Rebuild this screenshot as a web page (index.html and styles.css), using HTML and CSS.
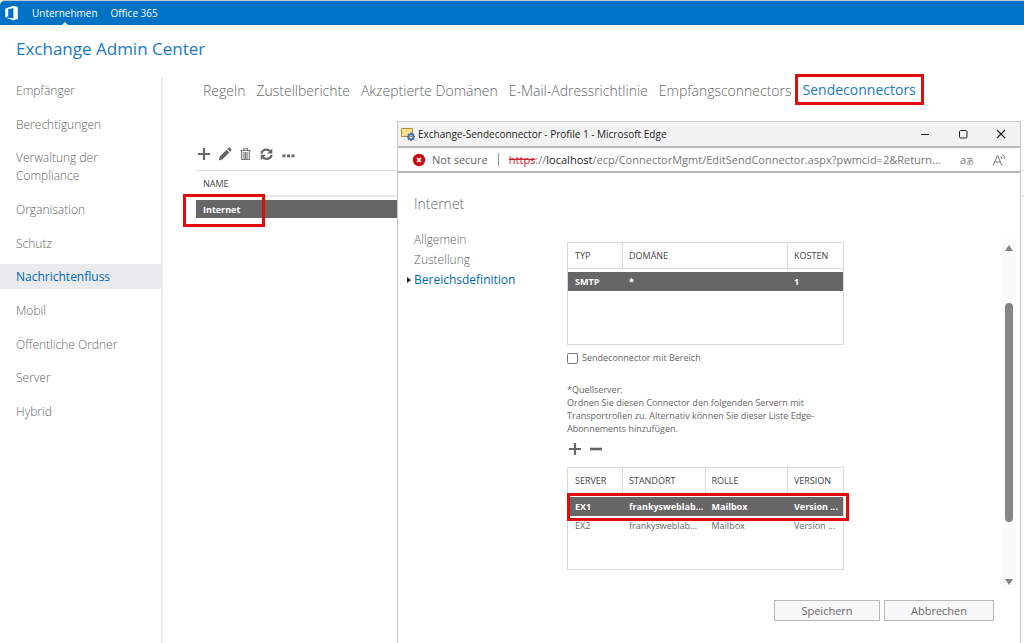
FILE: index.html
```html
<!DOCTYPE html>
<html lang="de">
<head>
<meta charset="utf-8">
<meta name="viewport" content="width=device-width, initial-scale=1">
<title>Exchange Admin Center</title>
<link rel="stylesheet" href="styles.css">
</head>
<body>
<div class="page">
  <header class="topbar">
    <svg class="office-logo" viewBox="0 0 14 16" width="14" height="16" aria-hidden="true"><path d="M0.3 3.5 8.4 0.7 12.8 1.9V13.9L8.4 15.2 0.3 12.4 8.4 13.3V3L3.2 4.2V11.3L0.3 12.5Z" fill="#fff"/></svg>
    <nav class="suite">
      <a class="suite-link current" href="#">Unternehmen</a>
      <a class="suite-link" href="#">Office 365</a>
    </nav>
  </header>

  <h1 class="title">Exchange Admin Center</h1>

  <div class="columns">
    <nav class="side">
      <a href="#">Empfänger</a>
      <a href="#">Berechtigungen</a>
      <a href="#">Verwaltung der<br>Compliance</a>
      <a href="#">Organisation</a>
      <a href="#">Schutz</a>
      <a class="active" href="#">Nachrichtenfluss</a>
      <a href="#">Mobil</a>
      <a href="#">Öffentliche Ordner</a>
      <a href="#">Server</a>
      <a href="#">Hybrid</a>
    </nav>

    <main class="main">
      <nav class="tabs">
        <a href="#">Regeln</a>
        <a href="#">Zustellberichte</a>
        <a href="#">Akzeptierte Domänen</a>
        <a href="#">E-Mail-Adressrichtlinie</a>
        <a href="#">Empfangsconnectors</a>
        <a class="active" href="#">Sendeconnectors</a>
      </nav>

      <div class="toolbar">
        <button type="button" aria-label="Neu"><svg viewBox="0 0 14 14" width="14" height="14"><path d="M7 1V13M1 7H13" stroke="#666" stroke-width="2.2"/></svg></button>
        <button type="button" aria-label="Bearbeiten"><svg viewBox="0 0 14 14" width="14" height="14"><path d="M0.6 13.4 1.8 9.4 8.6 2.7 11.4 5.5 4.6 12.3ZM9.4 1.9 10.7 0.7Q11.4 0.2 12.1 0.8L13.2 1.9Q13.8 2.7 13.2 3.4L12.1 4.7Z" fill="#666"/></svg></button>
        <button type="button" aria-label="Löschen"><svg viewBox="0 0 14 14" width="14" height="14"><path d="M1.5 3.5H11.5M4.5 3.2V1.8H8.5V3.2M2.7 4V12.5H10.3V4M4.9 5V12M6.5 5V12M8.1 5V12" fill="none" stroke="#777" stroke-width="1.1"/></svg></button>
        <button type="button" aria-label="Aktualisieren"><svg viewBox="0 0 14 14" width="14" height="14"><path d="M1.5 6.6A4.8 4.4 0 0 1 10 4.2M11.5 7.8A4.8 4.4 0 0 1 3 10.2" fill="none" stroke="#666" stroke-width="2.2"/><path d="M12.3 1.4V6.6H7ZM0.7 13V7.8H6Z" fill="#666"/></svg></button>
        <button type="button" aria-label="Mehr"><svg viewBox="0 0 14 14" width="14" height="14"><path d="M1.5 7.4h3v2.8h-3zM6 7.4h3v2.8H6zM10.5 7.4h3v2.8h-3z" fill="#666"/></svg></button>
      </div>

      <table class="list">
        <colgroup><col><col class="c-detail"></colgroup>
        <thead><tr><th scope="col">NAME</th><th></th></tr></thead>
        <tbody><tr><td class="chosen">Internet<span class="mark mark-name"></span></td><td></td></tr></tbody>
      </table>
    </main>
  </div>

  <section class="popup" aria-label="Exchange-Sendeconnector">
    <div class="popup-title">
      <svg viewBox="0 0 14 14" width="14" height="14" aria-hidden="true"><path d="M0.5 1.5H11.5V9.5H0.5Z" fill="#f5d978" stroke="#b58d36"/><path d="M1 2 6 6.5 11 2M1 9 4.5 5.5M11 9 7.5 5.5" fill="none" stroke="#fff8dc" stroke-width="1"/><circle cx="10" cy="9.8" r="2.6" fill="none" stroke="#4a74b4" stroke-width="1.9"/><path d="M10 5.6V7M10 12.6V14M5.8 9.8H7.2M12.8 9.8H14M7 6.8 8 7.8M12 11.8 13 12.8M13 6.8 12 7.8M7 12.8 8 11.8" stroke="#4a74b4" stroke-width="1.5"/></svg>
      <span class="popup-name">Exchange-Sendeconnector - Profile 1 - Microsoft Edge</span>
      <button type="button" aria-label="Minimieren"><svg viewBox="0 0 10 10" width="10" height="10"><path d="M1 5.5H9" stroke="#222"/></svg></button>
      <button type="button" aria-label="Maximieren"><svg viewBox="0 0 10 10" width="10" height="10"><rect x="1.5" y="1.5" width="7.5" height="7.5" rx="1.2" fill="none" stroke="#222"/></svg></button>
      <button type="button" aria-label="Schließen"><svg viewBox="0 0 10 10" width="10" height="10"><path d="M1 1 9 9M9 1 1 9" stroke="#222" stroke-width="1.1"/></svg></button>
    </div>
    <div class="address">
      <svg viewBox="0 0 14 14" width="14" height="14" aria-hidden="true"><circle cx="7" cy="7" r="6.2" fill="#cc0a14"/><path d="M5 5 9 9M9 5 5 9" stroke="#fff" stroke-width="1.5"/></svg>
      <span class="insecure">Not secure</span>
      <span class="url"><s>https</s>://<b>localhost</b>/ecp/ConnectorMgmt/EditSendConnector.aspx?pwmcid=2&amp;Return...</span>
      <button type="button" class="glyph translate" aria-label="Übersetzen">a<small>あ</small></button>
      <button type="button" class="glyph" aria-label="Vorlesen"><svg viewBox="0 0 14 14" width="14" height="14"><path d="M1.2 12.5 5.3 2.5H5.7L9.8 12.5M2.7 9H8.3M8.6 2.8Q9.8 4 9.6 5.6M10.5 1.2Q12.6 3.2 12.2 6" fill="none" stroke="#777"/></svg></button>
    </div>
    <div class="popup-body">
      <div class="sections">
        <h2>Internet</h2>
        <nav>
          <a href="#">Allgemein</a>
          <a href="#">Zustellung</a>
          <a class="active" href="#">Bereichsdefinition</a>
        </nav>
      </div>
      <form class="pane">
        <div class="grid-box">
          <table class="grid">
            <colgroup><col class="c-first"><col><col class="c-last"></colgroup>
            <thead><tr><th scope="col">TYP</th><th scope="col">DOMÄNE</th><th scope="col">KOSTEN</th></tr></thead>
            <tbody><tr class="selected"><td>SMTP</td><td>*</td><td>1</td></tr></tbody>
          </table>
        </div>
        <label class="scope"><input type="checkbox"><span>Sendeconnector mit Bereich</span></label>
        <p class="help">*Quellserver:<br>Ordnen Sie diesen Connector den folgenden Servern mit Transportrollen zu. Alternativ können Sie dieser Liste Edge-Abonnements hinzufügen.</p>
        <div class="mini-tools">
          <button type="button" aria-label="Hinzufügen"><svg viewBox="0 0 14 14" width="14" height="14"><path d="M7 1V13M1 7H13" stroke="#666" stroke-width="2.2"/></svg></button>
          <button type="button" aria-label="Entfernen"><svg viewBox="0 0 14 14" width="14" height="14"><path d="M1 7H13" stroke="#666" stroke-width="2.6"/></svg></button>
        </div>
        <div class="grid-box">
          <table class="grid">
            <colgroup><col class="c-first"><col><col><col class="c-last"></colgroup>
            <thead><tr><th scope="col">SERVER</th><th scope="col">STANDORT</th><th scope="col">ROLLE</th><th scope="col">VERSION</th></tr></thead>
            <tbody>
              <tr class="selected"><td>EX1</td><td>frankysweblab...</td><td>Mailbox</td><td>Version ...</td></tr>
              <tr><td>EX2</td><td>frankysweblab...</td><td>Mailbox</td><td>Version ...</td></tr>
            </tbody>
          </table>
          <span class="mark mark-server"></span>
        </div>
      </form>
      <div class="scroll" aria-hidden="true">
        <svg viewBox="0 0 8 6" width="8" height="6"><path d="M4 0 8 6H0Z" fill="#858585"/></svg>
        <div class="track"><div class="thumb"></div></div>
        <svg viewBox="0 0 8 6" width="8" height="6"><path d="M4 6 8 0H0Z" fill="#858585"/></svg>
      </div>
    </div>
    <div class="actions">
      <button type="button">Speichern</button>
      <button type="button">Abbrechen</button>
    </div>
  </section>
</div>
</body>
</html>
```
FILE: styles.css
```css
* { box-sizing: border-box; }
body {
  margin: 0;
  background: #fff;
  color: #666;
  font-family: "Open Sans", "Noto Sans", "Noto Sans CJK JP", sans-serif;
  font-size: 12px;
}
a { color: inherit; text-decoration: none; }
button { margin: 0; padding: 0; border: 0; background: none; color: inherit; font: inherit; }
svg { display: block; flex: none; }
table { width: 100%; border-collapse: separate; border-spacing: 0; table-layout: fixed; }
th { font-weight: 400; text-align: left; color: #444; }
td, th { padding: 0 7px; white-space: nowrap; overflow: hidden; }

.page { position: relative; min-height: 100vh; overflow: hidden; }

.topbar {
  display: flex;
  align-items: center;
  gap: 13px;
  height: 25px;
  padding-left: 5px;
  border-top: 1px solid #b9cfe0;
  border-radius: 5px 0 0 0;
  background: #0072c6;
  color: #fff;
}
.suite { display: flex; align-self: stretch; gap: 13px; font-size: 10px; line-height: 24px; }
.suite-link { position: relative; }
.suite-link.current::after {
  content: "";
  position: absolute;
  left: 50%;
  bottom: 0;
  margin-left: -3px;
  border: 3px solid transparent;
  border-top: 0;
  border-bottom-color: #fff;
}

.title {
  margin: 0;
  padding: 12px 16px 17px;
  color: #1979c4;
  font-size: 17px;
  font-weight: 400;
  line-height: 24px;
}

.columns { display: flex; }
.side {
  display: flex;
  flex: none;
  flex-direction: column;
  justify-content: space-between;
  box-sizing: content-box;
  width: 161px;
  height: 346px;
  padding-bottom: 219px;
  border-right: 2px solid #ececec;
  font-weight: 300;
}
.side a { padding: 4px 15px 3px 16px; line-height: 18px; }
.side .active { background: #e9ebed; color: #0068b3; font-weight: 400; }

.main { flex: 1; min-width: 0; padding: 0 0 0 33px; }
.tabs {
  display: flex;
  gap: 11px;
  padding-left: 7px;
  font-size: 14px;
  font-weight: 300;
  line-height: 25px;
  white-space: nowrap;
}
.tabs .active {
  margin: -4px -8px 0;
  padding: 0 5px;
  border: 3px solid #e30b0b;
  color: #1979c4;
  font-weight: 400;
}
.toolbar { display: flex; gap: 7px; padding: 42px 1px 9px; }

.list { border-top: 1px solid #d8dfe2; font-size: 9px; }
.list th { height: 26px; border-bottom: 2px solid #e4e8ea; }
.list tbody::before { content: ""; display: block; height: 3px; }
.list td { position: relative; height: 18px; overflow: visible; }
.c-detail { width: 100px; }
.selected, .chosen { background: #666; color: #fff; font-weight: 700; }

.mark { position: absolute; border: 3px solid #e30b0b; }
.mark-name { left: -13px; top: -6px; width: 82px; height: 33px; }
.mark-server { left: -1px; right: -6px; top: 25px; height: 28px; }

.popup {
  position: absolute;
  top: 121px;
  right: 3px;
  bottom: 0;
  left: 397px;
  display: flex;
  flex-direction: column;
  border: 1px solid #c6cacc;
  border-bottom: 0;
  background: #fff;
}
.popup-title {
  display: flex;
  align-items: center;
  height: 26px;
  padding: 0 14px 0 3px;
  border-bottom: 2px solid #b8b8b8;
  background: #f2f2f2;
  color: #222;
  font-size: 10px;
}
.popup-name { flex: 1; padding-left: 3px; }
.popup-title button { margin-left: 28px; }
.address {
  display: flex;
  align-items: center;
  height: 25px;
  padding: 0 14px;
  border-bottom: 2px solid #b8b8b8;
  font-size: 11px;
}
.insecure { margin: 0 10px 0 6px; padding-right: 10px; border-right: 1px solid #999; line-height: 13px; white-space: nowrap; }
.url { flex: 1; color: #777; white-space: nowrap; }
.url s { color: #d0212c; }
.url b { color: #222; font-weight: 400; }
.glyph { margin-left: 18px; color: #777; }
.translate small { font-size: 8px; }

.popup-body { display: flex; flex: 1; min-height: 0; }
.sections { flex: none; width: 169px; padding: 21px 0 0 16px; font-weight: 300; }
.sections h2 { margin: 0 0 16px; font-size: 14px; font-weight: 300; line-height: 20px; }
.sections nav { display: grid; line-height: 20px; }
.sections .active { position: relative; color: #0068b3; font-weight: 400; }
.sections .active::before {
  content: "";
  position: absolute;
  left: -7px;
  top: 7px;
  border: 3px solid transparent;
  border-left: 4px solid #222;
  border-right: 0;
}

.pane { flex: none; width: 277px; padding-top: 69px; font-size: 9px; }
.grid-box { position: relative; height: 103px; border: 1px solid #d5dcdc; }
.c-first { width: 54px; }
.c-last { width: 56px; }
.grid th { height: 26px; border-bottom: 1px solid #d5dcdc; }
.grid th + th { border-left: 1px solid #d5dcdc; }
.grid td { padding: 0 0 0 7px; }
.grid th { padding: 0 0 0 6px; }
.grid th:first-child { padding-left: 7px; }
.grid tbody::before { content: ""; display: block; height: 3px; }
.grid td { height: 19px; }
.scope { display: flex; align-items: center; gap: 4px; margin-top: 6px; line-height: 14px; }
.scope input { width: 11px; height: 11px; margin: 0; appearance: none; border: 1px solid #767676; border-radius: 2px; background: #fff; }
.help { margin: 18px 0 7px; line-height: 13px; }
.mini-tools { display: flex; gap: 7px; padding: 0 1px 11px; }

.scroll {
  display: flex;
  flex-direction: column;
  align-items: center;
  width: 14px;
  margin: 65px 4px 2px auto;
  padding: 7px 0 3px;
  background: #fbfbfb;
}
.track { flex: 1; width: 8px; padding: 52px 0 57px; }
.thumb { height: 100%; border-radius: 4px; background: #858585; }

.actions { display: flex; justify-content: flex-end; gap: 4px; padding: 10px 26px 22px; }
.actions button { width: 106px; height: 21px; border: 1px solid #b4bbbc; background: #f7f7f7; font-size: 11px; line-height: 17px; }
.actions button + button { width: 110px; }
```
